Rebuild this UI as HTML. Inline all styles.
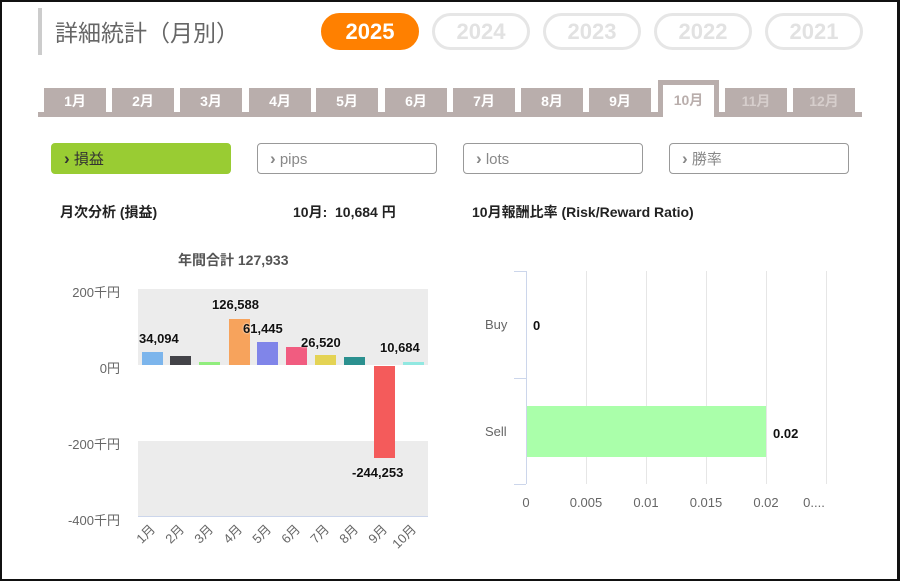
<!DOCTYPE html><html><head><meta charset="utf-8"><style>
*{margin:0;padding:0;box-sizing:border-box}
body{width:900px;height:581px;overflow:hidden;background:#fff;font-family:"Liberation Sans","Noto Sans CJK JP",sans-serif;position:relative}
.a{position:absolute}
.frame{left:0;top:0;width:900px;height:581px;border:2px solid #111;border-right-width:3px}
.pill{top:13px;height:37px;width:98px;border-radius:19px;border:3px solid #e6e6e6;color:#e2e2e2;font-weight:bold;font-size:22px;text-align:center;line-height:31px}
.tab{top:88px;height:26px;width:62px;background:#b9aeac;color:#fff;font-weight:bold;font-size:14px;text-align:center;line-height:26px}
.btn{top:143px;height:31px;width:180px;border:1px solid #999;border-radius:4px;color:#888;font-size:15px;line-height:29px;padding-left:12px}
.btn b{font-size:17px}
.t{font-size:14px;font-weight:bold;color:#222}
.yl{font-size:13px;color:#666;text-align:right;width:80px}
.bl{font-size:13px;font-weight:bold;color:#111;text-shadow:0 0 2px #fff}
</style></head><body>
<div class="a" style="left:38px;top:8px;width:4px;height:47px;background:#ccc"></div>
<div class="a" style="left:55px;top:14px;font-size:23px;color:#666">詳細統計（月別）</div>
<div class="a pill" style="left:321px;background:#ff8000;border-color:#ff8000;color:#fff">2025</div>
<div class="a pill" style="left:432px">2024</div>
<div class="a pill" style="left:543px">2023</div>
<div class="a pill" style="left:654px">2022</div>
<div class="a pill" style="left:765px">2021</div>
<div class="a" style="left:38px;top:112px;width:824px;height:5px;background:#b9aeac"></div>
<div class="a tab" style="left:44px">1月</div>
<div class="a tab" style="left:112px">2月</div>
<div class="a tab" style="left:180px">3月</div>
<div class="a tab" style="left:249px">4月</div>
<div class="a tab" style="left:316px">5月</div>
<div class="a tab" style="left:385px">6月</div>
<div class="a tab" style="left:453px">7月</div>
<div class="a tab" style="left:521px">8月</div>
<div class="a tab" style="left:589px">9月</div>
<div class="a tab" style="left:658px;top:80px;height:37px;width:61px;background:#fff;border:5px solid #b9aeac;border-bottom:none;color:#b9aeac;line-height:30px">10月</div>
<div class="a tab" style="left:725px;color:#d6cecc">11月</div>
<div class="a tab" style="left:793px;color:#d6cecc">12月</div>
<div class="a btn" style="left:51px;background:#99cc33;border-color:#99cc33;color:#333"><b>›</b>&nbsp;損益</div>
<div class="a btn" style="left:257px"><b>›</b>&nbsp;pips</div>
<div class="a btn" style="left:463px"><b>›</b>&nbsp;lots</div>
<div class="a btn" style="left:669px"><b>›</b>&nbsp;勝率</div>
<div class="a t" style="left:60px;top:202px">月次分析 (損益)</div>
<div class="a t" style="left:293px;top:202px">10月:&nbsp; 10,684 円</div>
<div class="a t" style="left:472px;top:202px">10月報酬比率 (Risk/Reward Ratio)</div>
<div class="a" style="left:178px;top:250px;font-size:14px;font-weight:bold;color:#555">年間合計 127,933</div>
<div class="a" style="left:138px;top:289px;width:290px;height:76px;background:#ececec"></div>
<div class="a" style="left:138px;top:441px;width:290px;height:76px;background:#ececec"></div>
<div class="a" style="left:138px;top:516px;width:290px;height:1px;background:#ccd6eb"></div>
<div class="a yl" style="left:40px;top:282px">200千円</div>
<div class="a yl" style="left:40px;top:358px">0円</div>
<div class="a yl" style="left:40px;top:434px">-200千円</div>
<div class="a yl" style="left:40px;top:510px">-400千円</div>
<div class="a" style="left:142px;top:352px;width:21px;height:13px;background:#7cb5ec"></div>
<div class="a" style="left:170px;top:356px;width:21px;height:9px;background:#434348"></div>
<div class="a" style="left:199px;top:362px;width:21px;height:3px;background:#90ed7d"></div>
<div class="a" style="left:229px;top:319px;width:21px;height:46px;background:#f7a35c"></div>
<div class="a" style="left:257px;top:342px;width:21px;height:23px;background:#8085e9"></div>
<div class="a" style="left:286px;top:347px;width:21px;height:18px;background:#f15c80"></div>
<div class="a" style="left:315px;top:355px;width:21px;height:10px;background:#e4d354"></div>
<div class="a" style="left:344px;top:357px;width:21px;height:8px;background:#2b908f"></div>
<div class="a" style="left:374px;top:366px;width:21px;height:92px;background:#f45b5b"></div>
<div class="a" style="left:403px;top:362px;width:21px;height:3px;background:#91e8e1"></div>
<div class="a bl" style="left:139px;top:331px">34,094</div>
<div class="a bl" style="left:212px;top:297px">126,588</div>
<div class="a bl" style="left:243px;top:321px">61,445</div>
<div class="a bl" style="left:301px;top:335px">26,520</div>
<div class="a bl" style="left:380px;top:340px">10,684</div>
<div class="a bl" style="left:352px;top:465px">-244,253</div>
<svg class="a" style="left:120px;top:520px" width="320" height="50"><g font-size="13" fill="#666" font-family="Liberation Sans,Noto Sans CJK JP,sans-serif" text-anchor="end">
<text transform="translate(36,10) rotate(-45)">1月</text><text transform="translate(65,10) rotate(-45)">2月</text><text transform="translate(94,10) rotate(-45)">3月</text><text transform="translate(123,10) rotate(-45)">4月</text><text transform="translate(152,10) rotate(-45)">5月</text><text transform="translate(181,10) rotate(-45)">6月</text><text transform="translate(210,10) rotate(-45)">7月</text><text transform="translate(239,10) rotate(-45)">8月</text><text transform="translate(268,10) rotate(-45)">9月</text><text transform="translate(297,10) rotate(-45)">10月</text></g></svg>
<svg class="a" style="left:470px;top:260px" width="430" height="260">
<g stroke="#e6e6e6"><line x1="116.5" y1="11" x2="116.5" y2="224"/><line x1="176.5" y1="11" x2="176.5" y2="224"/><line x1="236.5" y1="11" x2="236.5" y2="224"/><line x1="296.5" y1="11" x2="296.5" y2="224"/><line x1="356.5" y1="11" x2="356.5" y2="224"/></g>
<rect x="56" y="146" width="240" height="51" fill="#aaffaa"/>
<g stroke="#ccd6eb"><line x1="56.5" y1="11" x2="56.5" y2="224"/><line x1="44" y1="11.5" x2="56" y2="11.5"/><line x1="44" y1="118.5" x2="56" y2="118.5"/><line x1="44" y1="224.5" x2="56" y2="224.5"/></g>
<g font-family="Liberation Sans,sans-serif" font-size="13" fill="#666"><text x="15" y="69">Buy</text><text x="15" y="176">Sell</text>
<g text-anchor="middle"><text x="56" y="247">0</text><text x="116" y="247">0.005</text><text x="176" y="247">0.01</text><text x="236" y="247">0.015</text><text x="296" y="247">0.02</text><text x="344" y="247">0....</text></g></g>
<g font-family="Liberation Sans,sans-serif" font-size="13" font-weight="bold" fill="#111"><text x="63" y="70">0</text><text x="303" y="178">0.02</text></g>
</svg>
<div class="a frame"></div>
</body></html>
